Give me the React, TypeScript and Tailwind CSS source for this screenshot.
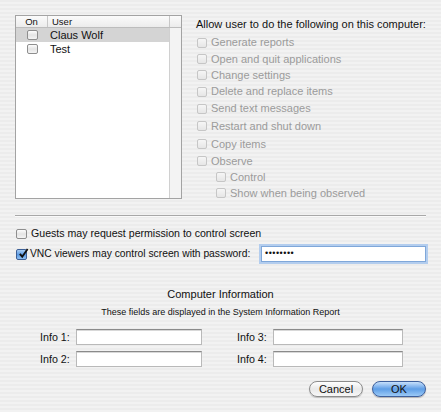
import React from 'react';

const font = "font-['Liberation_Sans',Arial,sans-serif]";

const Box: React.FC<{ disabled?: boolean; checked?: boolean }> = ({ disabled, checked }) => {
  if (checked) {
    return (
      <span className="relative inline-flex w-[11px] h-[11px] rounded-[2px] border border-[#3c5f96] bg-gradient-to-b from-[#a9cdf3] via-[#5a9ae3] to-[#8ec0f2] shrink-0">
        <svg viewBox="0 0 12 12" className="absolute left-[1px] top-[-2px] w-[11px] h-[11px]">
          <path d="M2 6.5 L4.6 9.5 L10.5 1" stroke="#111" strokeWidth="2" fill="none" />
        </svg>
      </span>
    );
  }
  return (
    <span
      className={
        disabled
          ? 'inline-block w-[10px] h-[10px] rounded-[2px] border border-[#c6c6c6] bg-gradient-to-b from-[#f6f6f6] to-[#e6e6e6] shrink-0'
          : 'inline-block w-[11px] h-[10px] rounded-[2px] border border-[#8e8e8e] bg-gradient-to-b from-[#fdfdfd] via-[#e4e4e4] to-[#f4f4f4] shrink-0'
      }
    />
  );
};

const options = [
  { label: 'Generate reports', h: 'h-[17px]', indent: false },
  { label: 'Open and quit applications', h: 'h-[16px]', indent: false },
  { label: 'Change settings', h: 'h-[16px]', indent: false },
  { label: 'Delete and replace items', h: 'h-[17px]', indent: false },
  { label: 'Send text messages', h: 'h-[17px]', indent: false },
  { label: 'Restart and shut down', h: 'h-[18px]', indent: false },
  { label: 'Copy items', h: 'h-[18px]', indent: false },
  { label: 'Observe', h: 'h-[16px]', indent: false },
  { label: 'Control', h: 'h-[16px]', indent: true },
  { label: 'Show when being observed', h: 'h-[16px]', indent: true },
];

const Field: React.FC<{ className?: string }> = ({ className }) => (
  <div
    className={
      'h-[16px] bg-white border border-[#b9b9b9] border-t-[#8a8a8a] shadow-[inset_0_1px_0_#d8d8d8] ' +
      (className || '')
    }
  />
);

const InfoRow: React.FC<{ label: string; w: string; cls?: string }> = ({ label, w, cls }) => (
  <div className={'flex items-center ' + (cls || '')}>
    <span className="w-[36px]">{label}</span>
    <Field className={w} />
  </div>
);

export default function App() {
  return (
    <div
      className={
        'w-[441px] h-[412px] overflow-hidden whitespace-nowrap text-[11px] text-[#111] bg-[repeating-linear-gradient(180deg,#ececec_0px,#ececec_2px,#f2f2f2_2px,#f2f2f2_4px)] ' +
        font
      }
    >
      <div className="flex pt-[15px] pl-[15px]">
        {/* user list */}
        <div className="w-[167px] h-[184px] border border-[#a3a3a3] bg-white flex flex-col">
          <div className="flex h-[12px] border-b border-[#bdbdbd] bg-gradient-to-b from-[#fbfbfb] to-[#ececec] text-[9.5px] leading-[11px]">
            <div className="w-[32px] text-center border-r border-[#c7c7c7]">On</div>
            <div className="w-[122px] pl-[4px] border-r border-[#c7c7c7]">User</div>
            <div className="flex-1" />
          </div>
          <div className="flex flex-1">
            <div className="flex-1 flex flex-col">
              <div className="flex items-center h-[14px] bg-[#d4d4d4]">
                <div className="w-[32px] flex justify-center pl-[1px]">
                  <Box />
                </div>
                <span className="pl-[2px]">Claus Wolf</span>
              </div>
              <div className="flex items-center h-[14px]">
                <div className="w-[32px] flex justify-center pl-[1px]">
                  <Box />
                </div>
                <span className="pl-[2px]">Test</span>
              </div>
            </div>
            <div className="w-[12px] border-l border-[#d0d0d0] bg-[#f3f3f3]" />
          </div>
        </div>

        {/* permissions */}
        <div className="ml-[14px] flex flex-col">
          <div className="h-[17px] pt-[2px] leading-[14px]">Allow user to do the following on this computer:</div>
          <div className="h-[2px]" />
          {options.map((o) => (
            <div
              key={o.label}
              className={
                'flex items-center gap-[4px] text-[#9b9b9b] ' + o.h + (o.indent ? ' pl-[20px]' : ' pl-[1px]')
              }
            >
              <Box disabled />
              <span>{o.label}</span>
            </div>
          ))}
        </div>
      </div>

      <div className="mt-[14px] mx-[15px] h-[2px] border-t border-[#a8a8a8] border-b border-b-[#fafafa]" />

      <div className="pl-[16px] mt-[9px] flex flex-col text-[10.6px]">
        <div className="flex items-center gap-[4px] h-[16px]">
          <Box />
          <span>Guests may request permission to control screen</span>
        </div>
        <div className="flex items-center h-[18px] mt-[3px]">
          <Box checked />
          <span className="ml-[3px] text-[10.3px]">VNC viewers may control screen with password:</span>
          <div className="ml-auto mr-[15px] w-[165px] h-[16px] bg-white border border-[#7fa7d9] shadow-[0_0_0_2px_#b3cdee] flex items-center pl-[3px] text-[9px] tracking-[0.5px] shrink-0">
            ••••••••
          </div>
        </div>
      </div>

      <div className="mt-[24px] text-center leading-[14px] text-[11px]">Computer Information</div>
      <div className="mt-[5px] text-center text-[9px] leading-[12px]">
        These fields are displayed in the System Information Report
      </div>

      <div className="mt-[11px] flex pl-[40px] text-[10.7px]">
        <div className="w-[197px] flex flex-col gap-[6px]">
          <InfoRow label="Info 1:" w="w-[126px]" />
          <InfoRow label="Info 2:" w="w-[126px]" />
        </div>
        <div className="flex flex-col gap-[6px]">
          <InfoRow label="Info 3:" w="w-[130px]" />
          <InfoRow label="Info 4:" w="w-[130px]" />
        </div>
      </div>

      <div className="mt-[14px] flex justify-end gap-[9px] pr-[15px]">
        <button className="w-[54px] h-[16px] rounded-full border border-[#8c8c8c] bg-gradient-to-b from-[#ffffff] via-[#e9e9e9] to-[#f7f7f7] text-[11px] leading-[14px] shadow-[0_1px_1px_rgba(0,0,0,0.2)]">
          Cancel
        </button>
        <button className="w-[54px] h-[16px] rounded-full border border-[#3d5f9c] bg-gradient-to-b from-[#c7e0fb] via-[#5e9ee6] to-[#9ccaf6] text-[11px] leading-[14px] shadow-[0_1px_1px_rgba(0,0,0,0.25)]">
          OK
        </button>
      </div>
    </div>
  );
}
